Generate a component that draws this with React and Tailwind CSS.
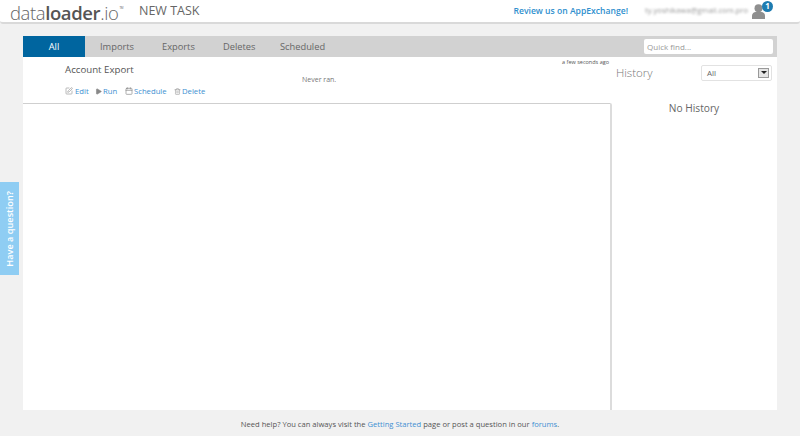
import { SquarePen, Play, Calendar, Trash2 } from "lucide-react";

const tabs = ["Imports", "Exports", "Deletes", "Scheduled"];

function UserIcon() {
  return (
    <svg width="13" height="15" viewBox="0 0 14 16" className="block">
      <circle cx="7" cy="4.500" r="4.300" fill="#8f8f8f" />
      <path d="M0 16v-3.500c0-2.500 2-4 4-4h6c2 0 4 1.500 4 4v3.500z" fill="#8f8f8f" />
    </svg>
  );
}

export default function App() {
  return (
    <div className="relative h-[436px] w-[800px] overflow-hidden bg-[#f1f1f1] font-['Open_Sans',sans-serif] text-[#555]">
      <header className="flex h-6 items-center rounded-b-[3px] border-b-2 border-[#d9d9d9] bg-white pr-[35px] pl-[10px]">
        <div className="mt-[3px] flex w-[111px] items-center text-[18.500px] leading-[22px] tracking-[-0.4px] text-[#666]">
          <span className="font-light">data</span>
          <span className="font-semibold text-[#555]">loader</span>
          <span className="font-light">.io</span>
          <span className="mb-[9px] ml-[1px] text-[3px] leading-none">TM</span>
        </div>
        <div className="ml-[18px] text-[12.500px] leading-[18px] text-[#666]">NEW TASK</div>
        <a className="ml-auto text-[8.600px] font-semibold text-[#2f8fce]">Review us on AppExchange!</a>
        <span className="ml-[17px] text-[7.600px] text-[#999] blur-[1.200px]">ty.yoshikawa@gmail.com.pro</span>
        <div className="relative ml-[4px] h-[15px] w-[13px]">
          <UserIcon />
          <span className="absolute -top-[3px] -right-[8px] flex h-[11px] w-[11px] items-center justify-center rounded-full bg-[#1d7bb0] text-[8px] font-bold text-white">
            1
          </span>
        </div>
      </header>

      <main className="mx-[23px] mt-[12px]">
        <nav className="flex h-[21px] items-center bg-[#d2d2d2] text-[9.300px] text-[#666]">
          <div className="flex h-full w-[62px] items-center justify-center bg-[#00659f] text-white">All</div>
          <div className="ml-[15px] w-[62px]">{tabs[0]}</div>
          <div className="w-[61px]">{tabs[1]}</div>
          <div className="w-[57px]">{tabs[2]}</div>
          <div>{tabs[3]}</div>
          <div className="mr-[4px] ml-auto flex h-[15px] w-[129px] items-center rounded-[2px] bg-white pl-[3px] text-[8px] text-[#999]">
            Quick find...
          </div>
        </nav>

        <div className="flex h-[353px] bg-white">
          <section className="flex w-[589px] flex-col">
            <div className="relative h-[46px] shrink-0">
              <div className="pt-[6px] pl-[42px] text-[9.700px] leading-[14px] text-[#555]">Account Export</div>
              <div className="mt-[8px] flex items-center pl-[42px] text-[7.700px] leading-[12px] text-[#3d8fd1]">
                <SquarePen size={8} className="text-[#999]" />
                <span className="ml-[2px] w-[20px]">Edit</span>
                <Play size={7} className="fill-[#888] text-[#888]" />
                <span className="ml-[1px] w-[22px]">Run</span>
                <Calendar size={8} className="text-[#888]" />
                <span className="ml-[1px] w-[40px]">Schedule</span>
                <Trash2 size={7} className="text-[#999]" />
                <span className="ml-[1px]">Delete</span>
              </div>
              <span className="absolute top-[18px] left-[279px] text-[7px] leading-[10px] text-[#777]">Never ran.</span>
              <span className="absolute top-[1px] right-[3px] text-[5.500px] leading-[8px] text-[#555]">a few seconds ago</span>
            </div>
            <div className="grow rounded-tr-[2px] border-t border-r-2 border-t-[#cfcfcf] border-r-[#dcdcdc] bg-white" />
          </section>

          <aside className="flex-1 pr-[5px] pl-[4px]">
            <div className="flex items-center justify-between pt-[7px]">
              <span className="text-[11.500px] leading-[17px] font-light text-[#777]">History</span>
              <div className="flex h-[16px] w-[71px] items-center justify-between rounded-[2px] border border-[#e2e2e2] pr-[2px] pl-[5px] text-[8px] text-[#666]">
                All
                <span className="flex h-[10px] w-[11px] items-center justify-center border border-[#999] bg-[#e5e5e5]">
                  <span className="h-0 w-0 border-x-[3px] border-t-[3px] border-x-transparent border-t-[#222]" />
                </span>
              </div>
            </div>
            <div className="mt-[19px] text-center text-[10.200px] leading-[16px] text-[#666]">No History</div>
          </aside>
        </div>
      </main>

      <footer className="mt-[6px] text-center text-[7.600px] leading-[16px] text-[#555]">
        Need help? You can always visit the <a className="text-[#3d8fd1]">Getting Started</a> page or post a question in our{" "}
        <a className="text-[#3d8fd1]">forums</a>.
      </footer>

      <div className="absolute top-[182px] left-0 flex h-[93px] w-[19px] items-center justify-center bg-[#8fcdf3]">
        <span className="-rotate-90 text-[9.200px] font-semibold whitespace-nowrap text-white">Have a question?</span>
      </div>
    </div>
  );
}
